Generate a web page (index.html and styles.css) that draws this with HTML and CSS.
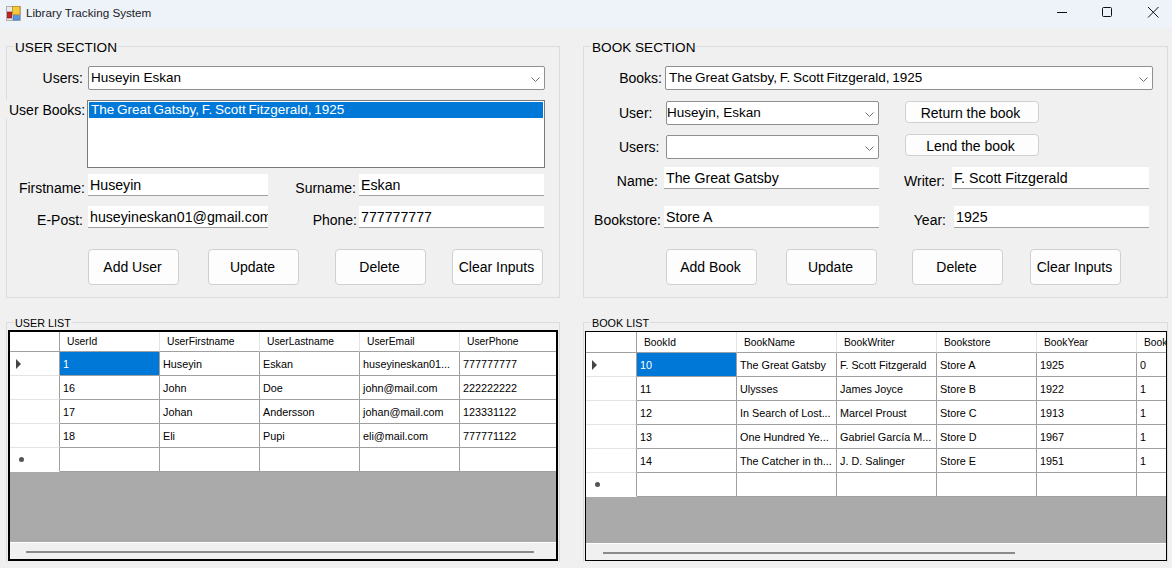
FILE: index.html
```html
<!DOCTYPE html>
<html lang="en">
<head>
<meta charset="utf-8">
<title>Library Tracking System</title>
<link rel="stylesheet" href="styles.css">
</head>
<body>
<div class="window">
  <header class="titlebar">
    <svg class="app-icon" width="15" height="15" viewBox="0 0 15 15">
      <rect x="0.5" y="0.5" width="14" height="14" fill="#e8e8e8" stroke="#b0b0b0"/>
      <rect x="6.4" y="0.4" width="7.5" height="8" fill="#f6c93c" stroke="#b98f1e" stroke-width="0.8"/>
      <rect x="1.3" y="6" width="4.4" height="6" fill="#c9201c" stroke="#7c1210" stroke-width="0.6"/>
      <rect x="7" y="9.6" width="6.6" height="4.4" fill="#5b94e0" stroke="#3d6fb5" stroke-width="0.6"/>
    </svg>
    <span class="app-title">Library Tracking System</span>
    <div class="win-controls">
      <svg class="win-btn" width="46" height="28" viewBox="0 0 46 28"><path d="M19 12.5H29" stroke="#111" fill="none"/></svg>
      <svg class="win-btn" width="46" height="28" viewBox="0 0 46 28"><rect x="18.5" y="7.5" width="9" height="9" rx="1" stroke="#111" fill="none"/></svg>
      <svg class="win-btn" width="46" height="28" viewBox="0 0 46 28"><path d="M18 7L28.5 17.5M28.5 7L18 17.5" stroke="#111" fill="none"/></svg>
    </div>
  </header>

  <main class="columns">
    <div class="column column-user">
      <section class="group group-form">
        <div class="legend">USER SECTION</div>
        <div class="row row-u1">
          <label class="lab lab-u1">Users:</label>
          <div class="combo combo-u1"><span>Huseyin Eskan</span><svg class="chev" width="9" height="5" viewBox="0 0 9 5"><path d="M0.5 0.5L4.5 4.5L8.5 0.5" fill="none" stroke="#707070"/></svg></div>
        </div>
        <div class="row row-u2">
          <label class="lab lab-ubooks">User Books:</label>
          <div class="listbox"><div class="list-sel tight">The Great Gatsby, F. Scott Fitzgerald, 1925</div></div>
        </div>
        <div class="row row-field row-u3">
          <label class="lab lab-low lab-first">Firstname:</label>
          <div class="text text-u1">Huseyin</div>
          <label class="lab lab-low lab-sur">Surname:</label>
          <div class="text text-u2">Eskan</div>
        </div>
        <div class="row row-field row-u4">
          <label class="lab lab-low lab-mail">E-Post:</label>
          <div class="text text-u1">huseyineskan01@gmail.com</div>
          <label class="lab lab-low lab-phone">Phone:</label>
          <div class="text text-u2">777777777</div>
        </div>
        <div class="row btns btns-u">
          <button class="btn">Add User</button>
          <button class="btn gap-a">Update</button>
          <button class="btn gap-b">Delete</button>
          <button class="btn gap-c">Clear Inputs</button>
        </div>
      </section>

      <section class="group group-list">
        <div class="legend legend-small">USER LIST</div>
        <div class="dgv dgv-user">
          <table class="grid">
            <colgroup><col class="c-head"><col class="c-col"><col class="c-col"><col class="c-col"><col class="c-col"><col class="c-col"></colgroup>
            <thead><tr><th class="rh"></th><th>UserId</th><th>UserFirstname</th><th>UserLastname</th><th>UserEmail</th><th>UserPhone</th></tr></thead>
            <tbody>
              <tr><td class="rh"><span class="arrow"></span></td><td class="sel">1</td><td>Huseyin</td><td>Eskan</td><td>huseyineskan01...</td><td>777777777</td></tr>
              <tr><td class="rh"></td><td>16</td><td>John</td><td>Doe</td><td>john@mail.com</td><td>222222222</td></tr>
              <tr><td class="rh"></td><td>17</td><td>Johan</td><td>Andersson</td><td>johan@mail.com</td><td>123331122</td></tr>
              <tr><td class="rh"></td><td>18</td><td>Eli</td><td>Pupi</td><td>eli@mail.com</td><td>777771122</td></tr>
              <tr><td class="rh"><span class="star"></span></td><td></td><td></td><td></td><td></td><td></td></tr>
            </tbody>
          </table>
          <div class="void"></div>
          <div class="hscroll"><div class="thumb thumb-user"></div></div>
        </div>
      </section>
    </div>

    <div class="column column-book">
      <section class="group group-form">
        <div class="legend">BOOK SECTION</div>
        <div class="row row-u1">
          <label class="lab lab-b1">Books:</label>
          <div class="combo combo-b1"><span class="tight">The Great Gatsby, F. Scott Fitzgerald, 1925</span><svg class="chev" width="9" height="5" viewBox="0 0 9 5"><path d="M0.5 0.5L4.5 4.5L8.5 0.5" fill="none" stroke="#707070"/></svg></div>
        </div>
        <div class="row row-b2">
          <label class="lab lab-b2">User:</label>
          <div class="combo combo-b2"><span>Huseyin, Eskan</span><svg class="chev" width="9" height="5" viewBox="0 0 9 5"><path d="M0.5 0.5L4.5 4.5L8.5 0.5" fill="none" stroke="#707070"/></svg></div>
          <button class="btn btn-small">Return the book</button>
        </div>
        <div class="row row-b3">
          <label class="lab lab-b2">Users:</label>
          <div class="combo combo-b2"><span></span><svg class="chev" width="9" height="5" viewBox="0 0 9 5"><path d="M0.5 0.5L4.5 4.5L8.5 0.5" fill="none" stroke="#707070"/></svg></div>
          <button class="btn btn-small">Lend the book</button>
        </div>
        <div class="row row-field row-b4">
          <label class="lab lab-low lab-name">Name:</label>
          <div class="text text-b1">The Great Gatsby</div>
          <label class="lab lab-low lab-writer">Writer:</label>
          <div class="text text-b2">F. Scott Fitzgerald</div>
        </div>
        <div class="row row-field row-b5">
          <label class="lab lab-low lab-store">Bookstore:</label>
          <div class="text text-b1">Store A</div>
          <label class="lab lab-low lab-year">Year:</label>
          <div class="text text-b3">1925</div>
        </div>
        <div class="row btns btns-b">
          <button class="btn">Add Book</button>
          <button class="btn gap-a">Update</button>
          <button class="btn gap-e">Delete</button>
          <button class="btn gap-d">Clear Inputs</button>
        </div>
      </section>

      <section class="group group-list">
        <div class="legend legend-small">BOOK LIST</div>
        <div class="dgv dgv-book">
          <table class="grid">
            <colgroup><col class="c-head-b"><col class="c-col"><col class="c-col"><col class="c-col"><col class="c-col"><col class="c-col"><col class="c-col"></colgroup>
            <thead><tr><th class="rh"></th><th>BookId</th><th>BookName</th><th>BookWriter</th><th>Bookstore</th><th>BookYear</th><th>BookStatus</th></tr></thead>
            <tbody>
              <tr><td class="rh"><span class="arrow"></span></td><td class="sel">10</td><td>The Great Gatsby</td><td>F. Scott Fitzgerald</td><td>Store A</td><td>1925</td><td>0</td></tr>
              <tr><td class="rh"></td><td>11</td><td>Ulysses</td><td>James Joyce</td><td>Store B</td><td>1922</td><td>1</td></tr>
              <tr><td class="rh"></td><td>12</td><td>In Search of Lost...</td><td>Marcel Proust</td><td>Store C</td><td>1913</td><td>1</td></tr>
              <tr><td class="rh"></td><td>13</td><td>One Hundred Ye...</td><td>Gabriel García M...</td><td>Store D</td><td>1967</td><td>1</td></tr>
              <tr><td class="rh"></td><td>14</td><td>The Catcher in th...</td><td>J. D. Salinger</td><td>Store E</td><td>1951</td><td>1</td></tr>
              <tr><td class="rh"><span class="star"></span></td><td></td><td></td><td></td><td></td><td></td><td></td></tr>
            </tbody>
          </table>
          <div class="void"></div>
          <div class="hscroll"><div class="thumb thumb-book"></div></div>
        </div>
      </section>
    </div>
  </main>
</div>
</body>
</html>
```

FILE: styles.css
```css
* { box-sizing: border-box; }
html, body { margin: 0; padding: 0; }
body {
  width: 1172px;
  height: 568px;
  overflow: hidden;
  background: #f0f0f0;
  color: #000;
  font-family: "Liberation Sans", Arial, sans-serif;
  font-size: 14px;
}
.window { display: flex; flex-direction: column; height: 568px; }

/* title bar */
.titlebar {
  display: flex;
  align-items: center;
  height: 28px;
  flex: none;
  padding-left: 6px;
  background: #eef3fa;
  overflow: hidden;
}
.app-icon { flex: none; margin-top: -2px; }
.app-title { margin-left: 5px; font-size: 11.7px; color: #1a1a1a; margin-top: -4px; }
.win-controls { display: flex; margin-left: auto; margin-right: -4px; }
.win-btn { display: block; }

/* columns */
.columns { display: flex; padding: 18px 0 0 6px; gap: 23px; }
.column { display: flex; flex-direction: column; }
.column-user { width: 554px; }
.column-book { width: 585px; }

.group { position: relative; border: 1px solid #dcdcdc; }
.group-form { height: 252px; padding-top: 19px; }
.group-list { height: 240px; margin-top: 24px; border-bottom: 0; padding: 7px 1px 0 1px; }
.legend {
  position: absolute;
  top: -7px;
  left: 7px;
  padding: 0 1px;
  background: #f0f0f0;
  font-size: 13.6px;
  line-height: 16px;
}
.legend-small { top: -7px; font-size: 10.8px; line-height: 14px; }

/* form rows */
.row { display: flex; align-items: flex-start; }
.row-field { height: 22px; }
.row-u2 { margin-top: 10px; }
.row-u3 { margin-top: 6px; }
.row-u4 { margin-top: 10px; }
.btns { margin-top: 21px; }
.btns-u { padding-left: 81px; }
.btns-b { padding-left: 82px; }
.row-b2 { margin-top: 11px; }
.row-b3 { margin-top: 10px; }
.row-b4 { margin-top: 8px; }
.row-b5 { margin-top: 17px; }

.lab {
  flex: none;
  text-align: right;
  line-height: 24px;
  white-space: nowrap;
}
.lab-low { line-height: 28px; }
.lab-u1 { width: 76px; margin-right: 5px; }
.lab-ubooks {
  width: 81px;
  margin-left: -1px;
  padding-left: 3px;
  line-height: 20px;
  height: 19px;
  background: #f0f0f0;
  text-align: left;
}
.lab-first { width: 78px; margin-right: 3px; }
.lab-sur { width: 88px; margin-right: 3px; }
.lab-mail { width: 76px; margin-right: 5px; }
.lab-phone { width: 89px; margin-right: 2px; }
.lab-b1 { width: 78px; margin-right: 3px; }
.lab-b2 { width: 82px; padding-left: 35px; text-align: left; }
.lab-name { width: 74px; margin-right: 6px; }
.lab-store { width: 77px; margin-right: 3px; }
.lab-writer { width: 66px; margin-right: 7px; }
.lab-year { width: 67px; margin-right: 8px; }

.combo {
  display: flex;
  align-items: center;
  justify-content: space-between;
  flex: none;
  height: 24px;
  padding: 0 4px 2px 2px;
  background: #fff;
  border: 1px solid #8f8f8f;
  border-radius: 2px;
  font-size: 13.5px;
  white-space: nowrap;
}
.tight { word-spacing: -1px; }
.combo-u1 { width: 457px; }
.combo-b1 { width: 488px; padding-left: 3px; }
.combo-b2 { width: 213px; padding-left: 0; }
.chev { flex: none; margin-top: 4px; }

.listbox {
  flex: none;
  width: 458px;
  height: 68px;
  padding: 1px;
  background: #fff;
  border: 1px solid #7a7a7a;
}
.list-sel {
  height: 16px;
  padding-left: 2px;
  line-height: 16px;
  background: #0078d7;
  color: #fff;
  font-size: 13.5px;
  white-space: nowrap;
}

.text {
  flex: none;
  height: 22px;
  padding: 0 2px;
  line-height: 23px;
  background: #fff;
  border-bottom: 1px solid #a0a0a0;
  font-size: 14.2px;
  white-space: nowrap;
  overflow: hidden;
}
.text-u1 { width: 180px; }
.text-u2 { width: 185px; }
.text-b1 { width: 215px; }
.text-b2 { width: 197px; }
.text-b3 { width: 195px; }

.btn {
  flex: none;
  width: 91px;
  height: 36px;
  padding: 0 2px 0 0;
  background: #fdfdfd;
  border: 1px solid #d0d0d0;
  border-radius: 4px;
  color: #000;
  font: inherit;
}
.gap-a { margin-left: 29px; }
.gap-b { margin-left: 36px; }
.gap-c { margin-left: 26px; }
.gap-d { margin-left: 27px; }
.gap-e { margin-left: 35px; }
.btn-small { width: 134px; height: 22px; margin-left: 26px; padding: 0 3px 0 0; line-height: 22px; }
.row-b3 .btn-small { margin-top: -1px; }

/* data grids */
.dgv {
  display: flex;
  flex-direction: column;
  height: 231px;
  overflow: hidden;
  background: #aaa;
  border: 2px solid #000;
}
.dgv-book { border-width: 1px; height: 230px; margin-top: 1px; width: 582px; }
.dgv-user { width: 550px; }
.grid {
  flex: none;
  table-layout: fixed;
  border-collapse: separate;
  border-spacing: 0;
  background: #fff;
  font-size: 10.8px;
}
.dgv-user .grid { width: 550px; }
.dgv-book .grid { width: 651px; }
.c-head { width: 50px; }
.c-head-b { width: 51px; }
.c-col { width: 100px; }
.grid th, .grid td {
  padding: 0 0 0 3px;
  height: 24px;
  text-align: left;
  font-weight: 400;
  white-space: nowrap;
  overflow: hidden;
  border-right: 1px solid #a0a0a0;
  border-bottom: 1px solid #a0a0a0;
}
.grid th {
  height: 20px;
  padding-left: 7px;
  border-right-color: #e3e3e3;
  font-size: 10.3px;
}
.dgv-book .grid th { height: 21px; }
.grid .rh {
  padding: 0;
  border-right-color: #a0a0a0;
  border-bottom-color: #e3e3e3;
  background: #fff;
}
.grid th.rh { border-bottom-color: #a0a0a0; }
.grid tbody tr:last-child .rh { border-bottom-color: #fff; }
.grid .sel { background: #0078d7; color: #fff; }
.arrow {
  display: block;
  width: 0;
  height: 0;
  margin-left: 6px;
  border-left: 5px solid #444;
  border-top: 5px solid transparent;
  border-bottom: 5px solid transparent;
}
.star {
  display: block;
  width: 5px;
  height: 5px;
  margin-left: 9px;
  border-radius: 50%;
  background: #555;
}
.void { flex: 1; }
.hscroll {
  flex: none;
  height: 17px;
  padding-top: 8px;
  background: #f0f0f0;
  border-top: 1px solid #fff;
}
.thumb { height: 2px; background: #8a8a8a; }
.thumb-user { width: 508px; margin-left: 16px; }
.thumb-book { width: 412px; margin-left: 17px; }
```
